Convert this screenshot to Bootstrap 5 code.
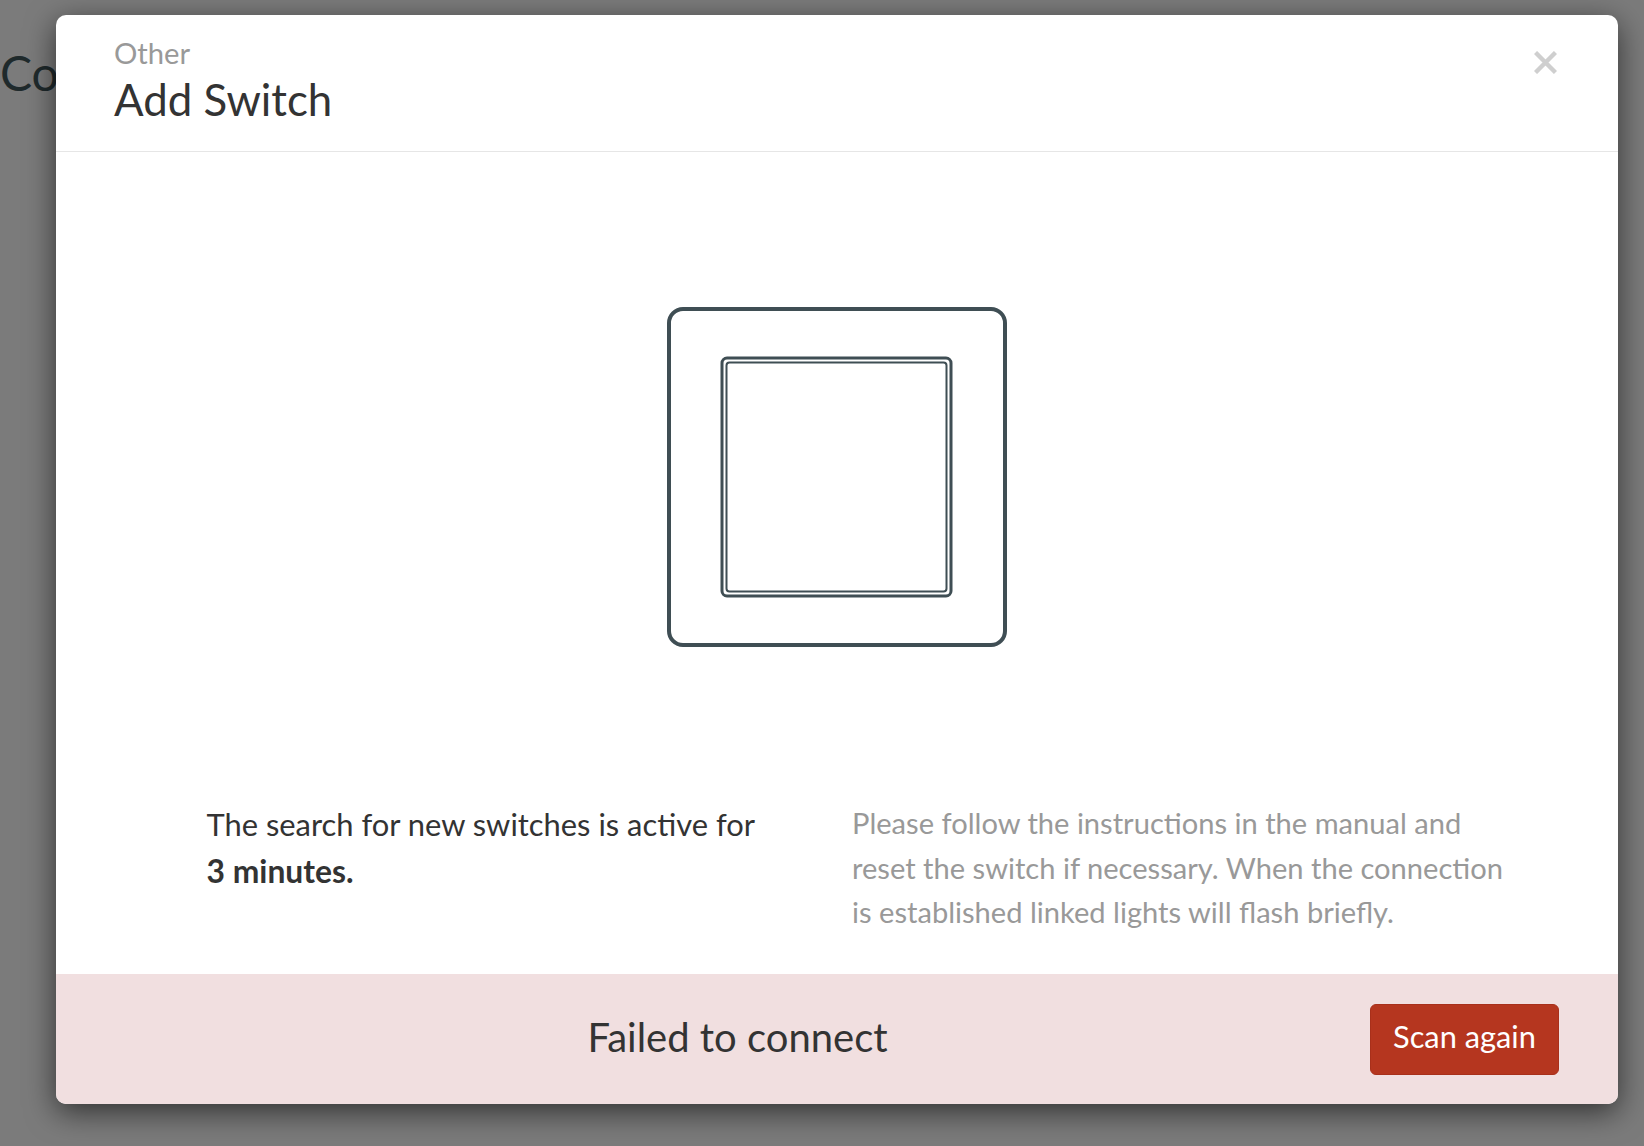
<!DOCTYPE html>
<html lang="en">
<head>
  <meta charset="utf-8">
  <title>Add Switch</title>
  <link href="https://cdn.jsdelivr.net/npm/bootstrap@5.3.3/dist/css/bootstrap.min.css" rel="stylesheet">
  <style>
    html, body { height: 100%; }
    body {
      background: #7b7b7b;
      font-family: Lato, "Liberation Sans", sans-serif;
      color: #333;
      overflow: hidden;
      padding: 15px 26px 0 56px;
    }
    .back-title { position: absolute; left: 0; top: 43px; font-size: 48px; line-height: 60px; color: #1f2a2c; }
    .dialog-box {
      position: relative;
      height: 1089px;
      background: #fff;
      border-radius: 10px;
      box-shadow: 0 8px 30px rgba(0,0,0,.6);
      overflow: hidden;
    }
    .dialog-head { height: 137px; padding: 22px 61px 0 58px; border-bottom: 1px solid #e6e6e6; }
    .dialog-sup { font-size: 29.2px; line-height: 32px; color: #999; }
    .dialog-title { font-size: 43.8px; line-height: 60px; color: #333; margin: 0; font-weight: 400; }
    .dialog-close { margin-top: 14px; height: 23px; }
    .switch-area { height: 647px; padding-top: 155px; }
    .info-left { width: 796px; padding: 2px 85px 0 150.5px; font-size: 30.9px; line-height: 47px; }
    .info-left b { font-size: 31.8px; font-weight: 700; }
    .info-right { width: 660px; padding-top: 2px; font-size: 29.1px; line-height: 44.5px; color: #999; }
    .info-row { height: 141px; }
    .fail-bar { height: 130px; background: #f1dfe0; padding-right: 59px; position: absolute; left: 0; right: 0; bottom: 0; }
    .fail-text { font-size: 40px; text-align: center; padding: 0 2px 4px 51px; }
    .btn-scan { background: #b5361f; border: 1px solid #a8301b; color: #fff; font-size: 30.8px; width: 189px; height: 71px; border-radius: 6px; padding: 0 0 4px; }
    .btn-scan:hover { background: #b5361f; color: #fff; }
  </style>
</head>
<body>
  <div class="back-title">Con</div>
  <div class="dialog-box">
    <div class="dialog-head d-flex justify-content-between">
      <div>
        <div class="dialog-sup">Other</div>
        <h1 class="dialog-title">Add Switch</h1>
      </div>
      <svg class="dialog-close" width="23" height="23" viewBox="0 0 23 23" stroke="#cfcfcf" stroke-width="4.4" aria-label="Close">
        <path d="M1.5 1.5 21.5 21.5M21.5 1.5 1.5 21.5"/>
      </svg>
    </div>
    <div class="switch-area d-flex justify-content-center">
      <svg width="340" height="340" viewBox="0 0 340 340" fill="none" stroke="#3f4e54">
        <rect x="2" y="2" width="336" height="336" rx="14" stroke-width="4"/>
        <rect x="55" y="51" width="229" height="238" rx="5" stroke-width="3"/>
        <rect x="59.5" y="55.5" width="220" height="229" rx="3" stroke-width="2"/>
      </svg>
    </div>
    <div class="info-row d-flex">
      <div class="info-left">The search for new switches is active for <b>3 minutes.</b></div>
      <div class="info-right">Please follow the instructions in the manual and reset the switch if necessary. When the connection is established linked lights will flash briefly.</div>
    </div>
    <div class="fail-bar d-flex align-items-center">
      <div class="fail-text flex-grow-1">Failed to connect</div>
      <button class="btn btn-scan flex-shrink-0">Scan again</button>
    </div>
  </div>
  <script src="https://cdn.jsdelivr.net/npm/bootstrap@5.3.3/dist/js/bootstrap.bundle.min.js"></script>
</body>
</html>
